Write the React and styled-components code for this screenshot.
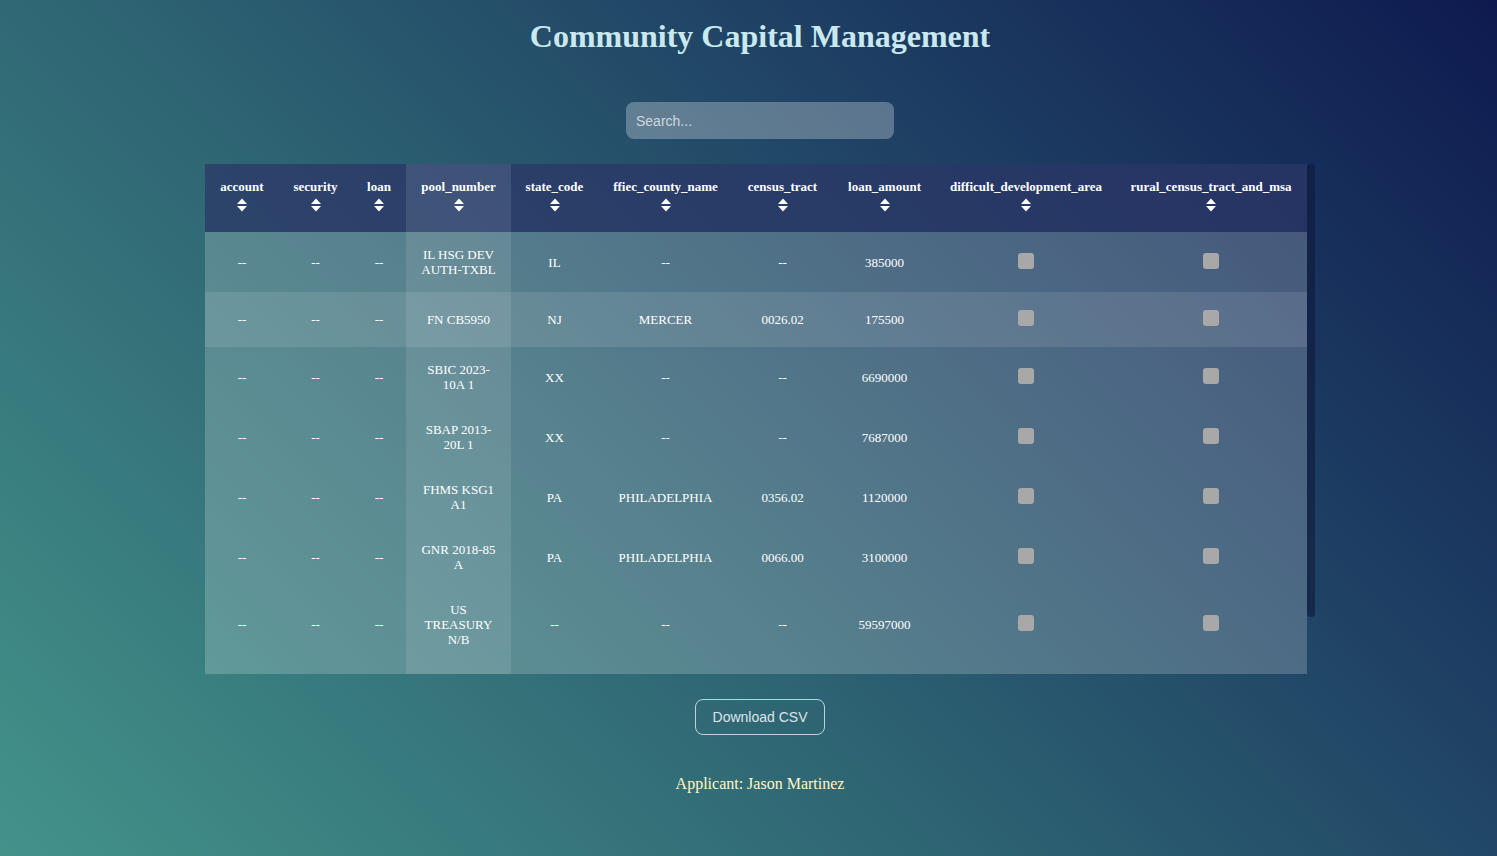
import React from 'react';
import styled, {createGlobalStyle} from 'styled-components';

const GlobalStyle = createGlobalStyle`
  html, body {
    margin: 0;
    padding: 0;
  }
  body {
    font-family: "Liberation Serif", "Times New Roman", serif;
  }
`;

const Wrapper = styled.div`
  box-sizing: border-box;
  min-height: 100vh;
  padding: 18px 0 40px 23px;
  display: flex;
  flex-direction: column;
  align-items: center;
  background: linear-gradient(45deg, #43928a 0%, #2e6573 40%, #1e3f63 70%, #0e1a4f 100%);
`;

const Title = styled.h1`
  margin: 0;
  font-size: 32px;
  line-height: 37px;
  font-weight: bold;
  color: #c9e8ef;
`;

const Search = styled.input`
  box-sizing: border-box;
  margin-top: 47px;
  width: 268px;
  height: 37px;
  padding: 0 10px;
  border: none;
  border-radius: 8px;
  background-color: rgba(255, 255, 255, 0.28);
  color: white;
  font-family: "Liberation Sans", Arial, sans-serif;
  font-size: 14px;
  outline: none;

  &::placeholder {
    color: rgba(255, 255, 255, 0.7);
  }
`;

const TableBox = styled.div`
  margin-top: 25px;
  width: 1110px;
  display: flex;
  align-items: flex-start;
`;

const ScrollRail = styled.div`
  flex: 0 0 8px;
  align-self: stretch;
  display: flex;
  flex-direction: column;
`;

const ScrollThumb = styled.div`
  height: 453px;
  border-radius: 4px;
  background: rgba(12, 22, 55, 0.55);
`;

const Table = styled.table`
  flex: 1;
  width: 1102px;
  table-layout: fixed;
  border-collapse: collapse;
  background-color: rgba(255, 255, 255, 0.2);
  color: white;
`;

const Col = styled.col`
  width: ${p => p.$w}px;
`;

const HeadRow = styled.tr`
  background-color: rgba(24, 36, 88, 0.68);
`;

const Th = styled.th`
  padding: 15px 8px;
  font-size: 13px;
  line-height: 15px;
  font-weight: bold;
  text-align: center;
  vertical-align: top;
  white-space: nowrap;
  background-color: ${p => p.$active ? 'rgba(255, 255, 255, 0.1)' : 'transparent'};
`;

const SortIcon = styled.svg`
  display: block;
  margin: 3px auto 4px;
`;

const Row = styled.tr`
  background-color: ${p => p.$hover ? 'rgba(255, 255, 255, 0.1)' : 'transparent'};
`;

const Td = styled.td`
  padding: 15px 14px ${p => p.$last ? '27px' : '15px'};
  font-size: 13px;
  line-height: 15px;
  text-align: center;
  vertical-align: middle;
  background-color: ${p => p.$active ? 'rgba(255, 255, 255, 0.1)' : 'transparent'};
`;

const Check = styled.input`
  appearance: none;
  display: block;
  width: 16px;
  height: 16px;
  margin: 3px auto 6px;
  border-radius: 3px;
  background-color: #a8a8a8;
`;

const DownloadButton = styled.button`
  margin-top: 25px;
  height: 36px;
  padding: 0 17px;
  background: transparent;
  border: 1px solid rgba(230, 236, 240, 0.8);
  border-radius: 8px;
  color: #dde4e8;
  font-family: "Liberation Sans", Arial, sans-serif;
  font-size: 14px;
  cursor: pointer;
`;

const Applicant = styled.p`
  margin: 40px 0 0;
  font-size: 16px;
  line-height: 18px;
  color: #fff7c8;
`;

const columns = [
    {key: 'account', w: 74},
    {key: 'security', w: 73},
    {key: 'loan', w: 54},
    {key: 'pool_number', w: 105},
    {key: 'state_code', w: 87},
    {key: 'ffiec_county_name', w: 135},
    {key: 'census_tract', w: 99},
    {key: 'loan_amount', w: 105},
    {key: 'difficult_development_area', w: 178},
    {key: 'rural_census_tract_and_msa', w: 192},
];

const rows = [
    {pool_number: 'IL HSG DEV AUTH-TXBL', state_code: 'IL', ffiec_county_name: '--', census_tract: '--', loan_amount: '385000'},
    {pool_number: 'FN CB5950', state_code: 'NJ', ffiec_county_name: 'MERCER', census_tract: '0026.02', loan_amount: '175500'},
    {pool_number: 'SBIC 2023-10A 1', state_code: 'XX', ffiec_county_name: '--', census_tract: '--', loan_amount: '6690000'},
    {pool_number: 'SBAP 2013-20L 1', state_code: 'XX', ffiec_county_name: '--', census_tract: '--', loan_amount: '7687000'},
    {pool_number: 'FHMS KSG1 A1', state_code: 'PA', ffiec_county_name: 'PHILADELPHIA', census_tract: '0356.02', loan_amount: '1120000'},
    {pool_number: 'GNR 2018-85 A', state_code: 'PA', ffiec_county_name: 'PHILADELPHIA', census_tract: '0066.00', loan_amount: '3100000'},
    {pool_number: 'US TREASURY N/B', state_code: '--', ffiec_county_name: '--', census_tract: '--', loan_amount: '59597000'},
];

const Sort = () => (
    <SortIcon width="12" height="16" viewBox="0 0 12 16">
        <path d="M1 7 L6 1.5 L11 7 Z" fill="white"/>
        <path d="M1 9 L6 14.5 L11 9 Z" fill="white"/>
    </SortIcon>
);

const App = () => {
    return (
        <Wrapper>
            <GlobalStyle/>
            <Title>Community Capital Management</Title>
            <Search type="text" placeholder="Search..."/>
            <TableBox>
                <Table>
                    <colgroup>
                        {columns.map(c => <Col key={c.key} $w={c.w}/>)}
                    </colgroup>
                    <thead>
                    <HeadRow>
                        {columns.map(c => (
                            <Th key={c.key} $active={c.key === 'pool_number'}>
                                {c.key}
                                <Sort/>
                            </Th>
                        ))}
                    </HeadRow>
                    </thead>
                    <tbody>
                    {rows.map((r, i) => {
                        const last = i === rows.length - 1;
                        return (
                            <Row key={i} $hover={i === 1}>
                                <Td $last={last}>--</Td>
                                <Td $last={last}>--</Td>
                                <Td $last={last}>--</Td>
                                <Td $last={last} $active>{r.pool_number}</Td>
                                <Td $last={last}>{r.state_code}</Td>
                                <Td $last={last}>{r.ffiec_county_name}</Td>
                                <Td $last={last}>{r.census_tract}</Td>
                                <Td $last={last}>{r.loan_amount}</Td>
                                <Td $last={last}><Check type="checkbox" disabled/></Td>
                                <Td $last={last}><Check type="checkbox" disabled/></Td>
                            </Row>
                        );
                    })}
                    </tbody>
                </Table>
                <ScrollRail>
                    <ScrollThumb/>
                </ScrollRail>
            </TableBox>
            <DownloadButton>Download CSV</DownloadButton>
            <Applicant>Applicant: Jason Martinez</Applicant>
        </Wrapper>
    );
};

export default App;
